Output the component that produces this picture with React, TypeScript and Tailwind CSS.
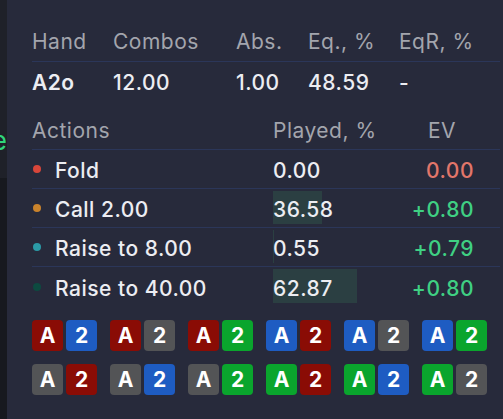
import React from 'react';

const actions = [
  { label: 'Fold', dot: 'bg-[#d8463a]', played: '0.00', pct: 0, ev: '0.00', evColor: 'text-[#e2766a]' },
  { label: 'Call 2.00', dot: 'bg-[#c9832c]', played: '36.58', pct: 36.58, ev: '+0.80', evColor: 'text-[#3fd083]' },
  { label: 'Raise to 8.00', dot: 'bg-[#2b9aa6]', played: '0.55', pct: 0.55, ev: '+0.79', evColor: 'text-[#3fd083]' },
  { label: 'Raise to 40.00', dot: 'bg-[#0d4a40]', played: '62.87', pct: 62.87, ev: '+0.80', evColor: 'text-[#3fd083]' },
];

const suit: Record<string, string> = {
  r: 'bg-[#8a0c05]',
  b: 'bg-[#1e5cc2]',
  g: 'bg-[#535456]',
  n: 'bg-[#0aa52d]',
};

const combos = [
  ['r', 'b'], ['r', 'g'], ['r', 'n'], ['b', 'r'], ['b', 'g'], ['b', 'n'],
  ['g', 'r'], ['g', 'b'], ['g', 'n'], ['n', 'r'], ['n', 'b'], ['n', 'g'],
];

function Card({ rank, s }: { rank: string; s: string }) {
  return (
    <div className={`w-[31px] h-[31px] rounded-[4px] flex items-center justify-center text-white font-bold text-[21px] leading-none ${suit[s]}`}>
      {rank}
    </div>
  );
}

export default function App() {
  return (
    <div className="w-[503px] h-[419px] flex bg-[#272a3b] text-[#ecedf2] overflow-hidden" style={{ fontFamily: 'Inter, "Noto Sans", sans-serif' }}>
      <div className="w-[7px] flex flex-col shrink-0">
        <div className="h-[178px] bg-[#1f2129] overflow-hidden flex justify-end pt-[128px]">
          <span className="text-[26px] leading-none text-[#2fd67b] whitespace-nowrap">e</span>
        </div>
        <div className="flex-1 bg-[#17191f]" />
      </div>

      <div className="flex-1 pl-[25px] pr-[3px] pt-[30px] text-[21px] tracking-[0.5px]">
        {/* hand summary */}
        <div className="grid grid-cols-[81px_123px_72px_91px_1fr] leading-[24px] text-[#a3a5ad] h-[32px] border-b border-[#2b3659]">
          <div>Hand</div>
          <div>Combos</div>
          <div>Abs.</div>
          <div>Eq., %</div>
          <div>EqR, %</div>
        </div>
        <div className="grid grid-cols-[81px_123px_72px_91px_1fr] leading-[24px] font-medium mt-[9px]">
          <div className="font-semibold">A2o</div>
          <div>12.00</div>
          <div>1.00</div>
          <div>48.59</div>
          <div>-</div>
        </div>

        {/* actions */}
        <div className="mt-[23px] pt-[1px] grid grid-cols-[241px_134px_1fr] leading-[24px] text-[#a3a5ad] h-[32px] border-b border-[#2b3659]">
          <div>Actions</div>
          <div>Played, %</div>
          <div className="pl-[21px]">EV</div>
        </div>
        {actions.map((a, i) => (
          <div
            key={a.label}
            className={`grid grid-cols-[241px_134px_1fr] h-[39px] py-[2px] leading-[24px] font-medium ${i < actions.length - 1 ? 'border-b border-[#2b3659]' : ''}`}
          >
            <div className="flex items-center">
              <span className={`ml-[1px] w-[8px] h-[8px] rounded-full ${a.dot}`} />
              <span className="ml-[14px] mt-[4px]">{a.label}</span>
            </div>
            <div className="relative flex items-center">
              <div className="absolute left-0 top-0 bottom-[1px] bg-[#2b3f42]" style={{ width: `${(a.pct / 100) * 134}px` }} />
              <span className="relative mt-[4px]">{a.played}</span>
            </div>
            <div className={`flex items-center justify-end pr-[26px] ${a.evColor}`}>
              <span className="mt-[4px]">{a.ev}</span>
            </div>
          </div>
        ))}

        {/* combos */}
        <div className="mt-[14px] grid grid-cols-[repeat(6,65px)] gap-x-[13px] gap-y-[13px] tracking-normal">
          {combos.map(([a, b], i) => (
            <div key={i} className="flex gap-[3px]">
              <Card rank="A" s={a} />
              <Card rank="2" s={b} />
            </div>
          ))}
        </div>
      </div>
    </div>
  );
}
